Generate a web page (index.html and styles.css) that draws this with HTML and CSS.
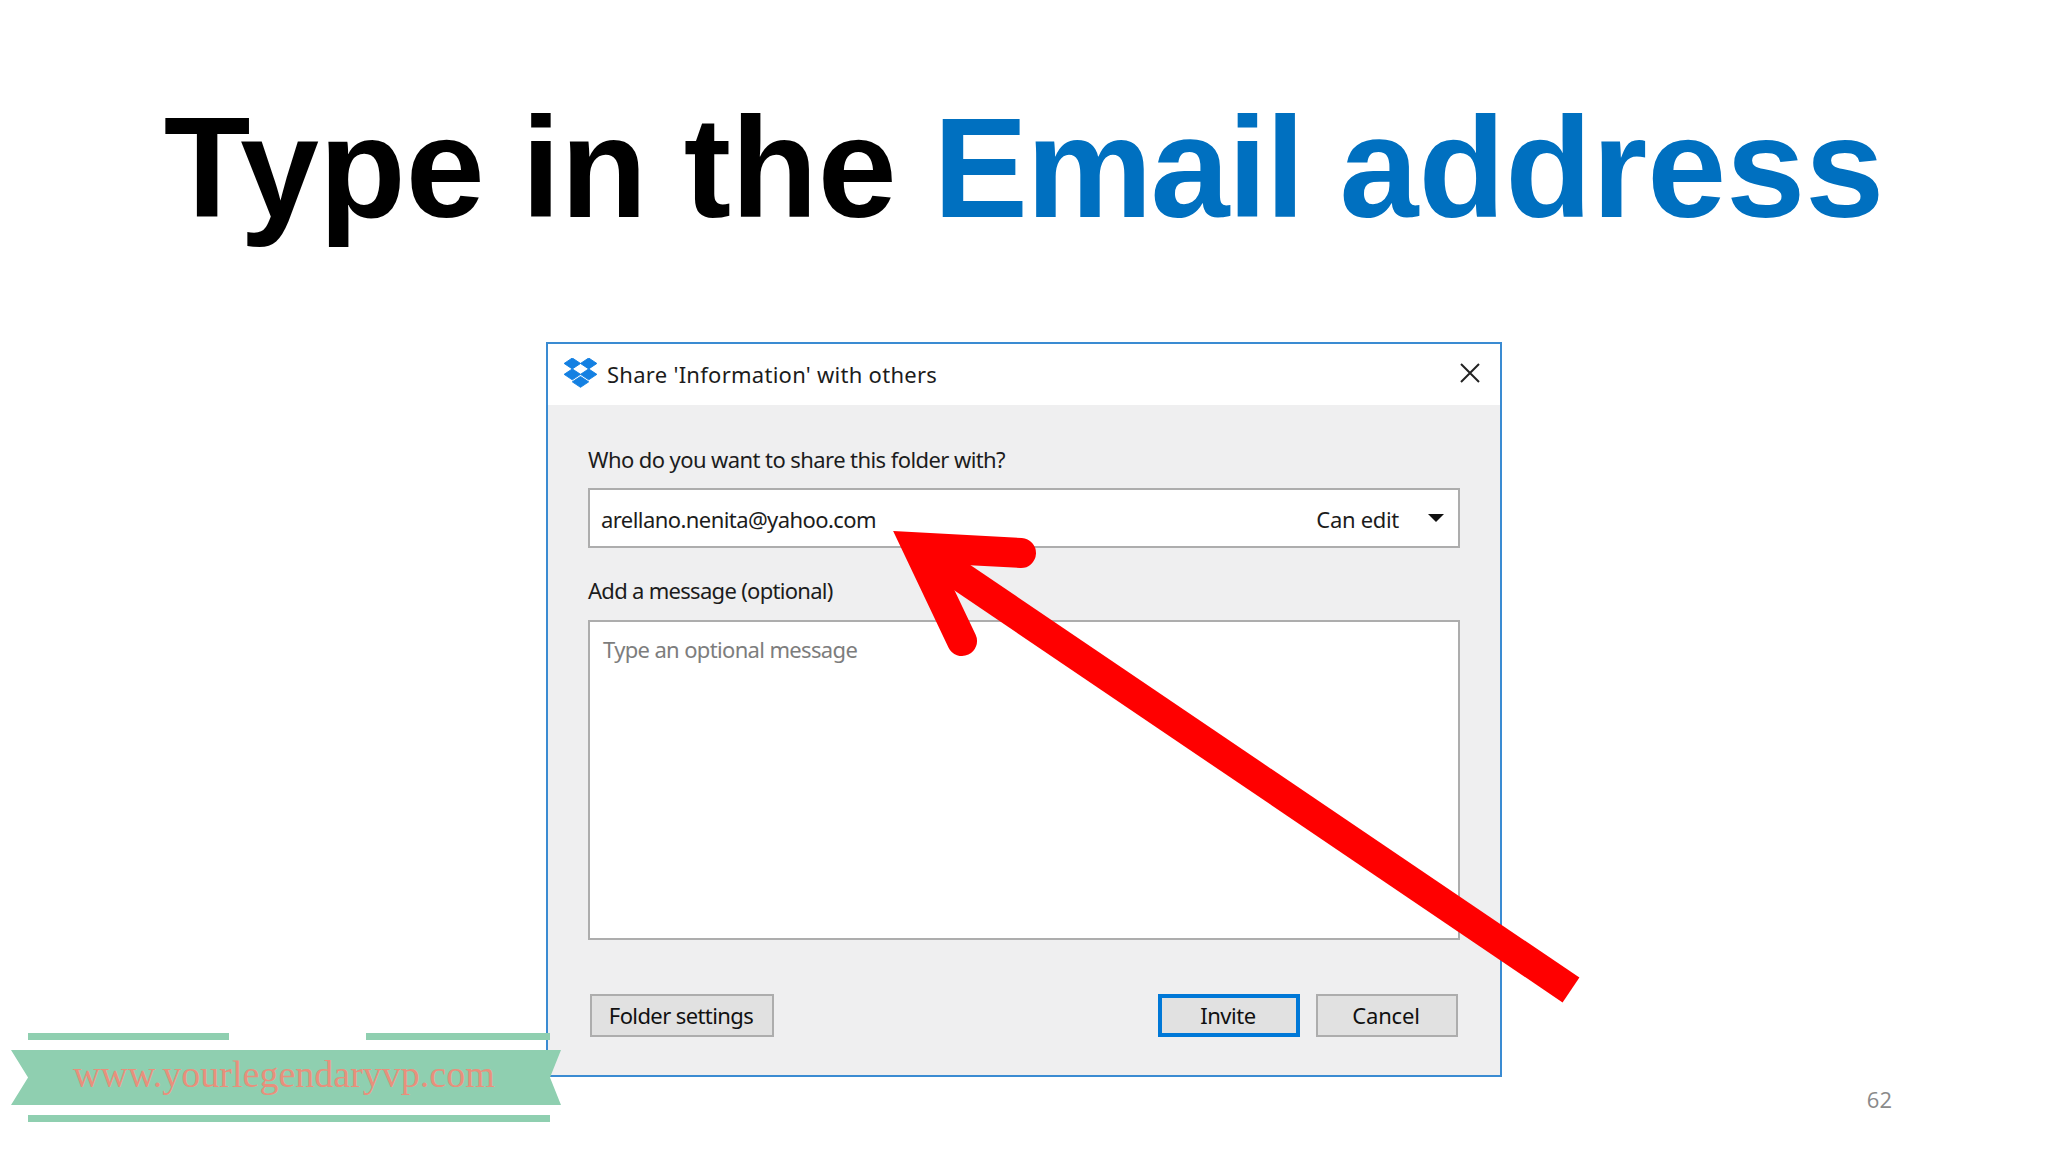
FILE: index.html
```html
<!DOCTYPE html>
<html lang="en">
<head>
<meta charset="utf-8">
<title>Type in the Email address</title>
<link rel="stylesheet" href="styles.css">
</head>
<body>
<main class="slide">
  <h1 class="headline">Type in the <span class="accent"><span class="tight">Email</span> address</span></h1>
  <section class="dialog">
    <header class="titlebar">
      <svg class="logo" viewBox="0 0 24 22" aria-hidden="true"><path d="M6 0 12 4 6 8 0 4zM18 0 24 4 18 8 12 4zM0 12 6 8 12 12 6 16zM18 8 24 12 18 16 12 12zM6 17.5 12 13.5 18 17.5 12 21.5z"/></svg>
      <span class="title">Share 'Information' with others</span>
      <svg class="close" viewBox="0 0 20 20" aria-hidden="true"><path d="M1 1 19 19M19 1 1 19"/></svg>
    </header>
    <div class="body">
      <label class="label label-who">Who do you want to share this folder with?</label>
      <div class="field">
        <span class="email">arellano.nenita@yahoo.com</span>
        <span class="perm">Can edit</span>
        <svg class="caret" viewBox="0 0 16 8" aria-hidden="true"><path d="M0 0H16L8 8z"/></svg>
      </div>
      <label class="label label-msg">Add a message (optional)</label>
      <div class="message"><span class="placeholder">Type an optional message</span></div>
      <div class="actions">
        <button class="btn btn-folder">Folder settings</button>
        <button class="btn btn-invite">Invite</button>
        <button class="btn btn-cancel">Cancel</button>
      </div>
    </div>
  </section>
  <footer class="footer"><span class="page">62</span></footer>

  <div class="ribbon">
    <div class="rule-row"><i class="rule rule-a"></i><i class="rule rule-b"></i></div>
    <div class="band">www.yourlegendaryvp.com</div>
    <i class="rule rule-c"></i>
  </div>

  <svg class="arrow" viewBox="0 0 2048 1152" aria-hidden="true">
    <path class="arrow-head" d="M1021 553 917.5 547.4 962 641"/>
    <path class="arrow-shaft" d="M917.5 547.4 1571 990"/>
  </svg>
</main>
</body>
</html>
```
FILE: styles.css
```css
* { box-sizing: border-box; }
html, body { margin: 0; padding: 0; background: #fff; }
.slide {
  position: relative;
  width: 2048px;
  height: 1152px;
  overflow: hidden;
  display: flex;
  flex-direction: column;
  align-items: center;
}
.headline {
  margin: 83px 0 0;
  height: 259px;
  font: 700 142px/170px "Liberation Sans", Arial, sans-serif;
  word-spacing: -3px;
  color: #000;
  text-align: center;
  white-space: nowrap;
}
.accent { color: #0070c0; }
.tight { letter-spacing: -1.8px; }

.dialog {
  width: 956px;
  height: 735px;
  border: 2px solid #3a8bd2;
  background: #efeff0;
  display: flex;
  flex-direction: column;
  font-family: "Noto Sans", "Open Sans", sans-serif;
  font-size: 22px;
  color: #1c1c1c;
}
.titlebar {
  height: 61px;
  flex: none;
  background: #fff;
  display: flex;
  align-items: center;
  padding: 0 20px 0 16px;
}
.logo { width: 33px; height: 30px; fill: #1480e2; stroke: #1480e2; stroke-width: 0.7; stroke-linejoin: round; flex: none; margin-top: -4px; }
.title { margin: -2px 0 0 10px; flex: 1; letter-spacing: 0.27px; }
.close { width: 20px; height: 20px; stroke: #222; stroke-width: 2; fill: none; flex: none; margin-top: -3px; }

.body { flex: 1; display: flex; flex-direction: column; padding: 0 40px; }
.label { display: block; line-height: 30px; white-space: nowrap; letter-spacing: -0.58px; }
.label-who { margin-top: 39px; height: 44px; }
.label-msg { margin-top: 26px; height: 46px; padding-top: 1px; letter-spacing: -0.7px; }

.field {
  height: 60px;
  border: 2px solid #adadad;
  background: #fff;
  display: flex;
  align-items: center;
  padding: 1px 14px 0 11px;
}
.email { flex: 1; letter-spacing: -0.57px; }
.perm { letter-spacing: -0.3px; }
.caret { width: 16px; height: 8px; fill: #111; margin-left: 29px; margin-top: -2px; }

.message {
  height: 320px;
  border: 2px solid #adadad;
  background: #fff;
  padding: 12px 13px;
  line-height: 30px;
}
.placeholder { color: #7d7d7d; letter-spacing: -0.65px; }

.actions { display: flex; margin-top: 54px; padding: 0 2px; }
.btn {
  height: 43px;
  width: 142px;
  padding: 0 2px 1px 0;
  border: 2px solid #adadad;
  background: #e1e1e1;
  font: inherit;
  color: #111;
}
.btn-folder { width: 184px; margin-right: auto; letter-spacing: -0.6px; }
.btn-invite { border: 4px solid #0078d7; margin-right: 16px; letter-spacing: -0.43px; }
.btn-cancel { letter-spacing: -0.2px; }

.footer { width: 100%; flex: 1; padding: 6px 156px 0 0; display: flex; justify-content: flex-end; }
.page { font: 22px/32px "Open Sans", sans-serif; color: #8a8a8a; }

.ribbon {
  position: absolute;
  left: 11px;
  top: 1033px;
  width: 550px;
  display: flex;
  flex-direction: column;
}
.rule { display: block; height: 7px; background: #8fcfb0; }
.rule-row { display: flex; padding: 0 11px 0 17px; justify-content: space-between; }
.rule-a { width: 201px; }
.rule-b { width: 184px; }
.rule-c { margin: 10px 11px 0 17px; }
.band {
  margin-top: 10px;
  height: 55px;
  background: #8fcfb0;
  clip-path: polygon(0 0, 100% 0, 98% 50%, 100% 100%, 0 100%, 3.1% 50%);
  font: 38px/48px "Liberation Serif", serif;
  color: #e8907c;
  padding-left: 62px;
  white-space: nowrap;
}

.arrow { position: absolute; inset: 0; width: 2048px; height: 1152px; pointer-events: none; fill: none; stroke: #f00; stroke-width: 30; }
.arrow-head { stroke-linecap: round; stroke-linejoin: miter; stroke-miterlimit: 10; }
.arrow-shaft { stroke-linecap: butt; }
```
